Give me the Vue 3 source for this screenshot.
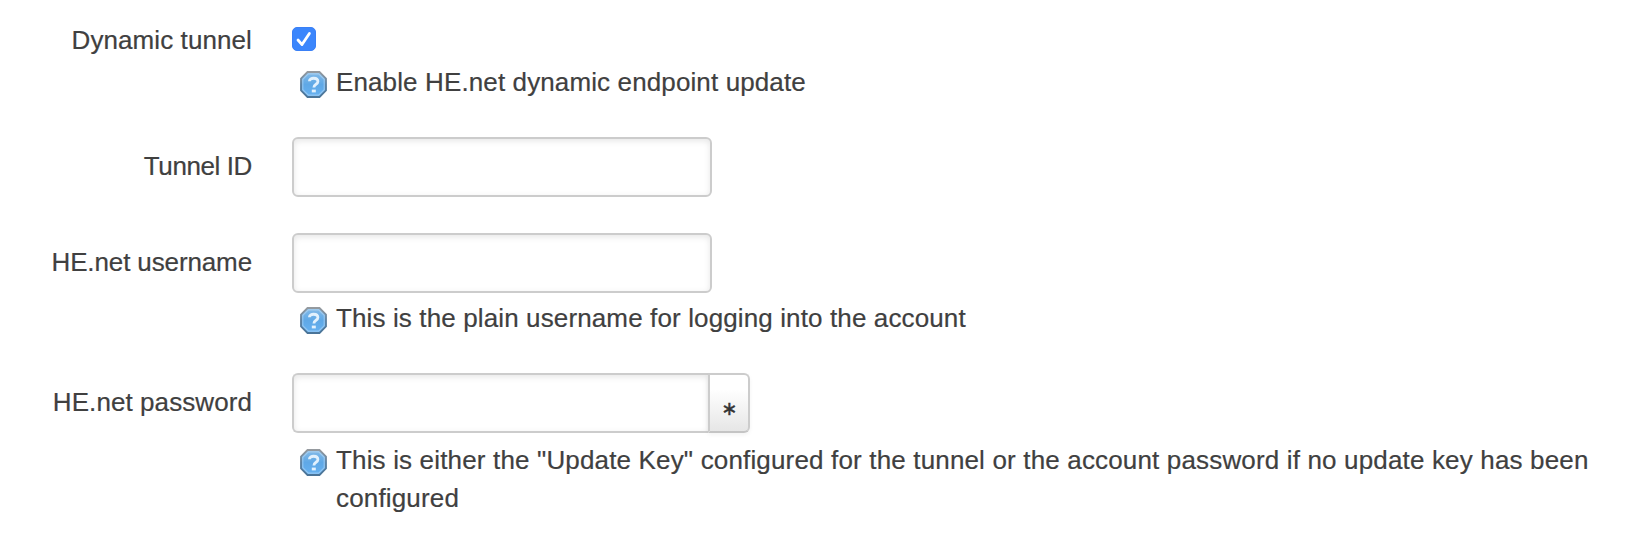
<template>
    <form class="form" @submit.prevent>
        <div v-for="field in fields" :key="field.id" class="row">
            <label class="row__label" :class="{ 'row__label--check': field.type === 'checkbox' }" :for="field.id">
                <span :style="{ letterSpacing: field.labelSpacing }">{{ field.label }}</span>
            </label>
            <div class="row__field">
                <label v-if="field.type === 'checkbox'" class="check">
                    <input :id="field.id" v-model="field.value" class="check__input" type="checkbox">
                    <svg v-if="field.value" class="check__mark" viewBox="0 0 24 24">
                        <path d="M6 13 L10 17.6 L17.4 6.4" />
                    </svg>
                </label>
                <div v-else class="control">
                    <input
                        :id="field.id"
                        v-model="field.value"
                        class="control__input"
                        :class="{ 'control__input--joined': field.type === 'password' }"
                        :type="field.type === 'password' && !visible ? 'password' : 'text'"
                    >
                    <button v-if="field.type === 'password'" class="control__button" type="button" @click="visible = !visible">
                        <span>∗</span>
                    </button>
                </div>
                <div v-if="field.hint" class="hint" :class="`hint--${field.type}`">
                    <svg class="hint__icon" viewBox="0 0 27 27">
                        <defs>
                            <linearGradient :id="`${field.id}-fill`" x1="0" y1="0" x2="0" y2="1">
                                <stop offset="0" stop-color="#86bce8" />
                                <stop offset="0.5" stop-color="#5fa8e6" />
                                <stop offset="1" stop-color="#66b2f2" />
                            </linearGradient>
                            <linearGradient :id="`${field.id}-edge`" x1="0" y1="0" x2="0" y2="1">
                                <stop offset="0" stop-color="#959a9f" />
                                <stop offset="0.5" stop-color="#5b7f9f" />
                                <stop offset="1" stop-color="#4a7498" />
                            </linearGradient>
                        </defs>
                        <path
                            d="M7.5 1 H19.5 L26 7.5 V19.5 L19.5 26 H7.5 L1 19.5 V7.5 Z"
                            :fill="`url(#${field.id}-fill)`"
                            :stroke="`url(#${field.id}-edge)`"
                            stroke-width="1.8"
                        />
                        <path class="hint__shine" d="M8.3 2.8 H18.7 L24.2 8.3 V18.7 L18.7 24.2 H8.3 L2.8 18.7 V8.3 Z" />
                        <path class="hint__question" d="M9.4 10.2 C9.4 6.2 17.9 6.2 17.9 10.5 C17.9 13.6 13.9 12.9 13.9 16.4" />
                        <path class="hint__question" d="M11.8 20 H15.8" />
                    </svg>
                    <span :style="{ letterSpacing: field.hintSpacing }">{{ field.hint }}</span>
                </div>
            </div>
        </div>
    </form>
</template>

<script setup>
import { ref } from 'vue'

const visible = ref(false)

const fields = ref([
    {
        id: 'dynamic',
        type: 'checkbox',
        label: 'Dynamic tunnel',
        labelSpacing: '0.09px',
        hint: 'Enable HE.net dynamic endpoint update',
        hintSpacing: '0.12px',
        value: true
    },
    { id: 'tunnel', type: 'text', label: 'Tunnel ID', labelSpacing: '-0.4px', value: '' },
    {
        id: 'username',
        type: 'text',
        label: 'HE.net username',
        labelSpacing: '-0.12px',
        hint: 'This is the plain username for logging into the account',
        hintSpacing: '0.125px',
        value: ''
    },
    {
        id: 'password',
        type: 'password',
        label: 'HE.net password',
        labelSpacing: '0.08px',
        hint: 'This is either the "Update Key" configured for the tunnel or the account password if no update key has been configured',
        hintSpacing: '0.16px',
        value: ''
    }
])
</script>

<style>
body{
    background: #fff;
}
</style>

<style scoped>
.form{
    display: flex;
    flex-direction: column;
    gap: 36px;
    box-sizing: border-box;
    height: 538px;
    padding: 21px 28px 0 0;
    overflow: hidden;
    color: #404040;
    font-family: "Helvetica Neue", "Liberation Sans", Arial, sans-serif;
    font-size: 26px;
    line-height: 38px;
    -webkit-text-stroke: 0.2px #404040;
}
.row{
    display: flex;
    gap: 40px;
}
.row__label{
    flex: none;
    width: 252px;
    padding-top: 10px;
    text-align: right;
    white-space: nowrap;
}
.row__label--check{
    padding-top: 0;
}
.row__field{
    flex: 1;
    min-width: 0;
}
.check{
    display: grid;
    width: 24px;
    height: 24px;
    margin-top: 6px;
}
.check__input{
    grid-area: 1 / 1;
    appearance: none;
    width: 24px;
    height: 24px;
    margin: 0;
    border-radius: 5px;
    border: 1px solid #b5b5b5;
}
.check__input:checked{
    border-color: #3a80f6;
    background: #3b86fc;
}
.check__mark{
    grid-area: 1 / 1;
    z-index: 1;
    fill: none;
    stroke: #fff;
    stroke-width: 2.8;
    stroke-linecap: round;
    stroke-linejoin: round;
}
.control{
    display: flex;
    height: 60px;
}
.control__input{
    box-sizing: border-box;
    width: 420px;
    height: 60px;
    padding: 8px;
    border: 2px solid #ccc;
    border-radius: 6px;
    outline: none;
    background: #fff;
    box-shadow: inset 0 2px 6px rgba(0, 0, 0, .1);
    color: #808080;
    font: inherit;
}
.control__input--joined{
    width: 416px;
    border-right: 0;
    border-radius: 6px 0 0 6px;
}
.control__button{
    box-sizing: border-box;
    width: 42px;
    height: 60px;
    padding: 10px 0 0 1px;
    border: 2px solid #ccc;
    border-bottom-color: #c4c4c4;
    border-radius: 0 6px 6px 0;
    background: linear-gradient(#fff, #fff 25%, #e6e6e6);
    box-shadow: 0 2px 4px rgba(0, 0, 0, .05);
    color: #333;
    font-family: "DejaVu Sans", sans-serif;
    font-size: 19px;
    line-height: 36px;
    -webkit-text-stroke: 0.5px #333;
}
.hint{
    display: flex;
    gap: 9.5px;
    padding-left: 7.5px;
}
.hint--checkbox{
    margin-top: 12px;
}
.hint--text{
    margin-top: 6px;
}
.hint--password{
    margin-top: 8px;
}
.hint__icon{
    flex: none;
    width: 27px;
    height: 27px;
    margin-top: 7.5px;
}
.hint__shine{
    fill: none;
    stroke: #fff;
    stroke-opacity: .3;
    stroke-width: 1.2;
}
.hint__question{
    fill: none;
    stroke: #e2f1fd;
    stroke-width: 2.8;
}
</style>
